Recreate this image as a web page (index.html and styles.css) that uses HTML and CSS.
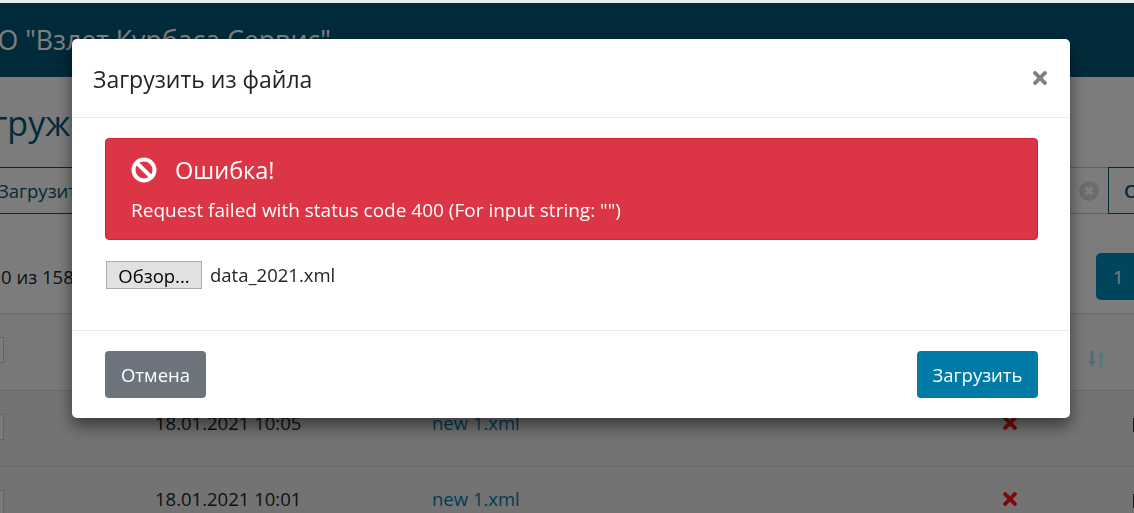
FILE: index.html
```html
<!DOCTYPE html>
<html lang="ru">
<head>
    <meta charset="UTF-8">
    <meta name="viewport" content="width=device-width, initial-scale=1.0">
    <title>Загруженные файлы</title>
    <link rel="stylesheet" href="styles.css">
</head>
<body>

    <svg class="icon-defs" width="0" height="0">
        <symbol id="times" viewBox="0 0 352 512">
            <path d="M242.72 256l100.07-100.07c12.28-12.28 12.28-32.19 0-44.48l-22.24-22.24c-12.28-12.28-32.19-12.28-44.48 0L176 189.28 75.93 89.21c-12.28-12.28-32.19-12.28-44.48 0L9.21 111.45c-12.28 12.28-12.28 32.19 0 44.48L109.28 256 9.21 356.07c-12.28 12.28-12.28 32.19 0 44.48l22.24 22.24c12.28 12.28 32.2 12.28 44.48 0L176 322.72l100.07 100.07c12.28 12.28 32.2 12.28 44.48 0l22.24-22.24c12.28-12.28 12.28-32.19 0-44.48L242.72 256z"/>
        </symbol>
    </svg>

    <div class="page">
        <nav class="navbar">
            <span class="brand">ООО "Взлет Курбаса Сервис"</span>
        </nav>

        <main class="content">
            <h1 class="page-title">Загруженные файлы</h1>

            <div class="toolbar">
                <button class="tool-btn tool-upload">Загрузить из файла</button>
                <div class="search">
                    <svg class="search-clear" viewBox="0 0 20 20">
                        <circle cx="10" cy="10" r="10"/>
                        <path d="M6.500 6.500l7 7M13.500 6.500l-7 7"/>
                    </svg>
                </div>
                <button class="tool-btn tool-search">Обновить</button>
            </div>

            <div class="pager">
                <span class="pager-info">1-10 из 158</span>
                <a class="page-link" href="#">1</a>
            </div>

            <div class="table">
                <div class="row row-head">
                    <span class="check"></span>
                    <span></span>
                    <span></span>
                    <svg class="sort-icon" viewBox="0 0 20 20">
                        <path class="sort-down" d="M3.500 1H6.500V11H9L5 17L1 11H3.500Z"/>
                        <path class="sort-up" d="M12.500 17H15.500V7H18L14 1L10 7H12.500Z"/>
                    </svg>
                </div>
                <div class="row">
                    <span class="check"></span>
                    <span>18.01.2021 10:05</span>
                    <a class="file-link" href="#">new 1.xml</a>
                    <svg class="del-icon"><use href="#times"/></svg>
                    <span class="row-action"></span>
                </div>
                <div class="row">
                    <span class="check"></span>
                    <span>18.01.2021 10:01</span>
                    <a class="file-link" href="#">new 1.xml</a>
                    <svg class="del-icon"><use href="#times"/></svg>
                    <span class="row-action"></span>
                </div>
            </div>
        </main>
    </div>

    <!-- Окно загрузки -->
    <div class="overlay">
        <div class="modal">
            <div class="modal-header">
                <h2>Загрузить из файла</h2>
                <svg class="modal-close"><use href="#times"/></svg>
            </div>

            <div class="modal-body">
                <div class="alert">
                    <div class="alert-title">
                        <svg class="alert-icon" viewBox="0 0 26 26">
                            <circle cx="13" cy="13" r="10.500"/>
                            <path d="M5.800 5.800l14.400 14.400"/>
                        </svg>
                        <span>Ошибка!</span>
                    </div>
                    <p>Request failed with status code 400 (For input string: "")</p>
                </div>

                <div class="file-field">
                    <button class="file-btn">Обзор...</button>
                    <span>data_2021.xml</span>
                </div>
            </div>

            <div class="modal-footer">
                <button class="btn btn-cancel">Отмена</button>
                <button class="btn btn-upload">Загрузить</button>
            </div>
        </div>
    </div>

</body>
</html>
```

FILE: styles.css
```css
body {
    margin: 0;
    height: 513px;
    overflow: hidden;
    background-color: #e9efef;
    font-family: "Open Sans", "Noto Sans", sans-serif;
    font-size: 18.500px;
    line-height: 24px;
    color: #212529;
}

.icon-defs {
    display: block;
}

button {
    font-family: inherit;
}

.page {
    margin-top: 3px;
    height: 510px;
    overflow: hidden;
    background-color: #f8f8f8;
}

.navbar {
    height: 74px;
    box-sizing: border-box;
    padding-top: 19px;
    margin-left: -44px;
    background-color: #035574;
    color: #fff;
    font-size: 26.700px;
    line-height: 36px;
    white-space: nowrap;
}

.content {
    margin-left: -46px;
    width: 1300px;
}

.page-title {
    margin: 0;
    height: 90px;
    padding-top: 24px;
    box-sizing: border-box;
    font-size: 34px;
    line-height: 44px;
    font-weight: 400;
    color: #035574;
}

.toolbar {
    display: flex;
    height: 47px;
    margin-left: 28px;
}

.tool-btn {
    background: #f8f8f8;
    border: 1px solid #035574;
    color: #035574;
    font-size: 18.500px;
    padding: 0 15px;
    white-space: nowrap;
}

.tool-upload {
    width: 190px;
}

.tool-search {
    width: 146px;
    text-align: left;
    font-weight: 600;
}

.search {
    flex: 1;
    display: flex;
    align-items: center;
    justify-content: flex-end;
    padding-right: 9px;
    border-top: 1px solid #c4c4c4;
    border-bottom: 1px solid #c4c4c4;
}

.search-clear {
    width: 20px;
    height: 20px;
}

.search-clear circle {
    fill: #d8d8d8;
}

.search-clear path {
    stroke: #fff;
    stroke-width: 2.500;
    fill: none;
}

.pager {
    display: flex;
    justify-content: space-between;
    align-items: center;
    height: 47px;
    margin-top: 39px;
    margin-bottom: 13px;
}

.pager-info {
    padding-left: 20px;
}

.page-link {
    width: 158px;
    height: 47px;
    box-sizing: border-box;
    padding: 12px 17px;
    border-radius: 5px 0 0 5px;
    background-color: #008ab8;
    color: #fff;
    text-decoration: none;
}

.row {
    display: grid;
    grid-template-columns: 201px 277px 577px 124px 1fr;
    height: 76px;
    box-sizing: border-box;
    padding-top: 20px;
    border-top: 1px solid #d4d4d4;
    background-color: #e6e6e6;
}

.row-head {
    height: 77px;
    background-color: #f0f0f0;
}

.check {
    display: block;
    width: 26px;
    height: 26px;
    margin-left: 24px;
    margin-top: 3px;
    box-sizing: border-box;
    border: 1px solid #c8c8c8;
    background-color: #f8f8f8;
}

.file-link {
    color: #007ba7;
    text-decoration: none;
}

.del-icon {
    width: 14px;
    height: 24px;
    margin-left: -6px;
    fill: #ff1414;
}

.row-action {
    display: block;
    width: 10px;
    height: 14px;
    margin-top: 7px;
    background-color: #333;
}

.sort-icon {
    width: 20px;
    height: 20px;
    margin-top: 16px;
    margin-left: 78px;
}

.sort-down {
    fill: #a0d8f0;
}

.sort-up {
    fill: #a8f0ff;
}

/* Окно поверх страницы */
.overlay {
    position: fixed;
    top: 3px;
    left: 0;
    right: 0;
    bottom: 0;
    display: flex;
    align-items: flex-start;
    padding: 36px 64px 0 72px;
    background-color: rgba(0,0,0,0.5);
}

.modal {
    flex: 1;
    height: 379px;
    display: flex;
    flex-direction: column;
    background-color: #fff;
    border-radius: 5px;
    box-shadow: 0 8px 16px rgba(0,0,0,0.5);
}

.modal-header {
    display: flex;
    justify-content: space-between;
    align-items: center;
    height: 79px;
    box-sizing: border-box;
    padding: 2px 23px 0 21px;
    border-bottom: 1px solid #e9ecef;
}

.modal-header h2 {
    margin: 0;
    font-size: 23px;
    line-height: 30px;
    font-weight: 400;
}

.modal-close {
    width: 14px;
    height: 24px;
    margin-top: -2px;
    fill: #808080;
}

.modal-body {
    flex: 1;
    padding: 20px 32px 0 33px;
}

.alert {
    height: 102px;
    box-sizing: border-box;
    padding: 14px 25px;
    border: 1px solid #d32535;
    border-radius: 4px;
    background-color: #dc3545;
    color: #fff;
}

.alert-title {
    display: flex;
    align-items: center;
    gap: 18px;
    font-size: 23.500px;
    line-height: 34px;
}

.alert-icon {
    width: 26px;
    height: 26px;
    fill: none;
    stroke: #fff;
    stroke-width: 4;
}

.alert p {
    margin: 11px 0 0;
    font-size: 19px;
    line-height: 24px;
}

.file-field {
    display: flex;
    align-items: center;
    gap: 8px;
    margin-top: 21px;
    margin-left: 1px;
}

.file-btn {
    width: 96px;
    height: 28px;
    padding: 0;
    border: 1px solid #adadad;
    background-color: #e1e1e1;
    color: #000;
    font-size: 18.500px;
}

.modal-footer {
    display: flex;
    justify-content: space-between;
    height: 88px;
    box-sizing: border-box;
    padding: 20px 32px 0 33px;
    border-top: 1px solid #e9ecef;
}

.btn {
    height: 47px;
    padding: 0;
    border: none;
    border-radius: 4px;
    color: #fff;
    font-size: 18.500px;
}

.btn-cancel {
    width: 101px;
    background-color: #6c757d;
}

.btn-upload {
    width: 121px;
    background-color: #007ba7;
}
```
